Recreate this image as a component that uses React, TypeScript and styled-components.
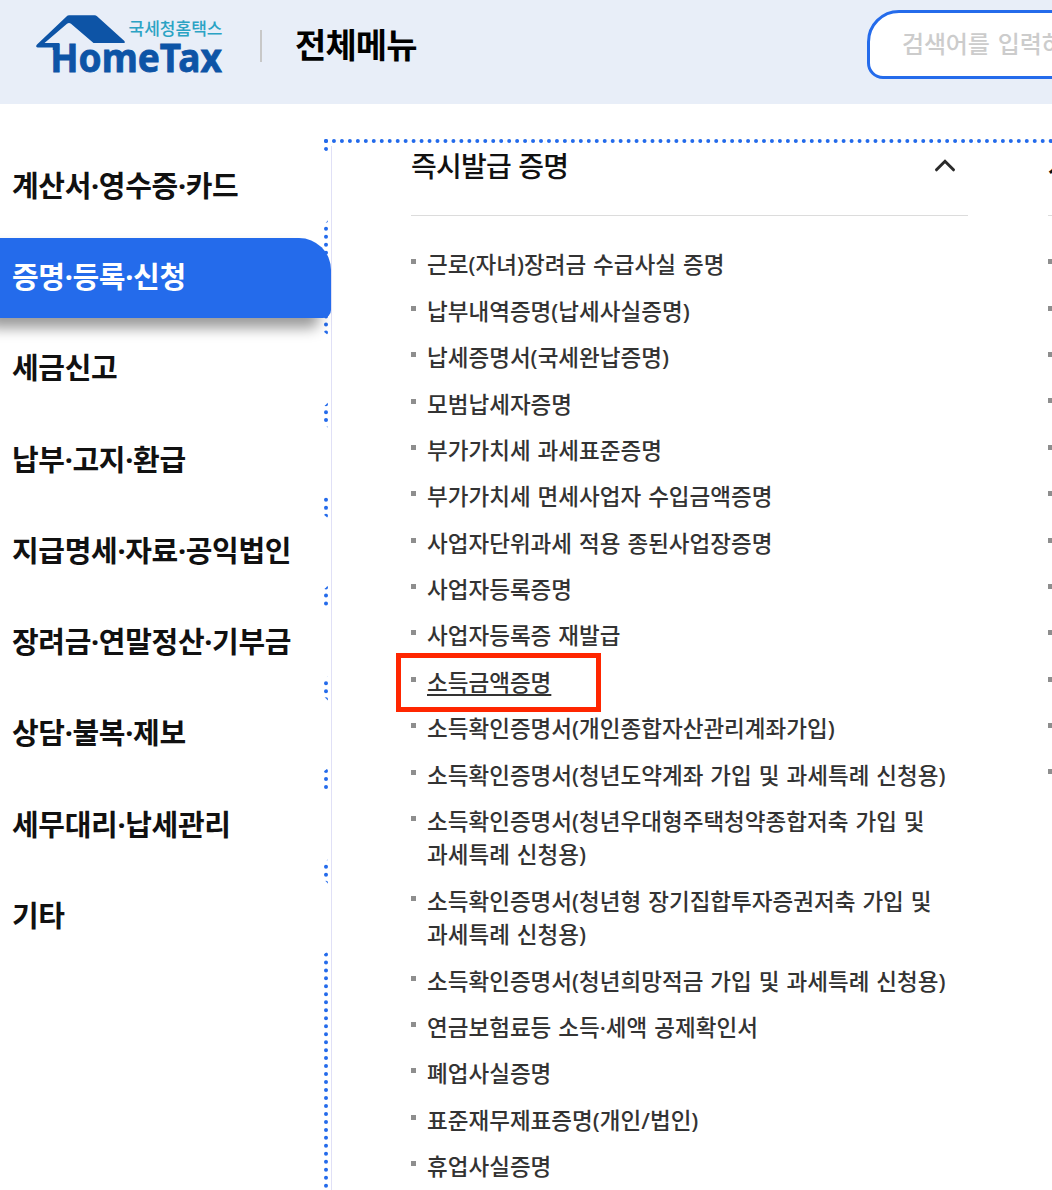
import React from "react";
import styled, { createGlobalStyle, css } from "styled-components";

const BLUE = "#246beb";

const GlobalStyle = createGlobalStyle`
  *, *::before, *::after { box-sizing: border-box; }
  html, body { margin: 0; padding: 0; background: #fff; }
  body {
    overflow: hidden;
    font-family: "Noto Sans", "Noto Sans CJK KR", sans-serif;
    color: #111;
  }
  ul { list-style: none; margin: 0; padding: 0; }
  h1, h2 { margin: 0; }
`;

const Page = styled.div`
  width: 100%;
  height: 1190px;
  overflow: hidden;
  display: flex;
  flex-direction: column;
`;

const Header = styled.header`
  flex: none;
  height: 104px;
  padding: 10px 0 0 36px;
  display: flex;
  align-items: flex-start;
  background: #e8eef8;
`;

const Logo = styled.svg`
  flex: none;
  display: block;
  width: 190px;
  height: 68px;
`;

const Divider = styled.span`
  flex: none;
  width: 2px;
  height: 32px;
  margin: 20px 33px 0 34px;
  background: #c8c8c8;
`;

const PageTitle = styled.h1`
  width: 572px;
  flex: none;
  font-size: 34px;
  line-height: 50px;
  font-weight: 700;
  letter-spacing: -0.9px;
  margin-top: 10px;
  color: #000;
`;

const SearchBox = styled.div`
  flex: none;
  width: 420px;
  height: 69px;
  padding: 0 32px;
  border: 3px solid ${BLUE};
  border-radius: 32px 16px 32px 16px;
  background: #fff;
  font-size: 24px;
  line-height: 61px;
  font-weight: 500;
  letter-spacing: -0.15px;
  word-spacing: 2px;
  color: #ccc;
  white-space: nowrap;
`;

const Body = styled.div`
  flex: 1;
  display: flex;
  align-items: flex-start;
`;

const Nav = styled.nav`
  flex: none;
  width: 331px;
  padding-top: 42.75px;
  position: relative;
  z-index: 1;
`;

const NavList = styled.ul`
  display: flex;
  flex-direction: column;
  gap: 11.25px;
`;

const NavItem = styled.li<{ $active?: boolean }>`
  height: 80px;
  padding-left: 12px;
  line-height: 78px;
  font-size: 29px;
  font-weight: 700;
  letter-spacing: -0.33px;
  white-space: nowrap;
  background: #fff;
  border-radius: 0 16px 16px 0;
  ${(p) =>
    p.$active &&
    css`
      position: relative;
      z-index: 1;
      color: #fff;
      background: ${BLUE};
      border-radius: 0 32px 8px 0;
      box-shadow: -12px 10px 14px rgba(0, 0, 0, 0.4);
    `}
`;

const Panel = styled.main`
  flex: none;
  width: 1200px;
  height: 1058px;
  margin: 35px 0 0 -7px;
  padding: 3px 0 0 3px;
  border: 4px dotted ${BLUE};
`;

const Columns = styled.div`
  height: 1100px;
  padding-left: 79px;
  border-left: 1px solid #e0e0f6;
  display: flex;
  gap: 80px;
`;

const Column = styled.section`
  flex: none;
  width: 557px;
`;

const ColumnHead = styled.div`
  height: 70px;
  padding-right: 12px;
  border-bottom: 1px solid #dcdcdc;
  display: flex;
  justify-content: space-between;
`;

const ColumnTitle = styled.h2`
  font-size: 28px;
  line-height: 40px;
  font-weight: 500;
  letter-spacing: -0.8px;
  word-spacing: 1px;
`;

const Chevron = styled.svg`
  width: 22px;
  height: 16px;
  margin-top: 11px;
`;

const Items = styled.ul`
  padding-top: 32.4px;
  display: flex;
  flex-direction: column;
  gap: 12.93px;
`;

const Item = styled.li<{ $picked?: boolean }>`
  min-height: 33.45px;
  padding-left: 16px;
  position: relative;
  font-size: 22.5px;
  line-height: 33.45px;
  font-weight: 500;
  letter-spacing: 0.02px;
  word-spacing: 1.1px;
  white-space: pre-line;
  color: #333;
  text-decoration: ${(p) => (p.$picked ? "underline" : "none")};
  text-decoration-thickness: 2px;
  text-underline-offset: 3px;

  &::before {
    content: "";
    position: absolute;
    left: 0;
    top: 11px;
    width: 5px;
    height: 5px;
    background: #8e8e8e;
  }

  ${(p) =>
    p.$picked &&
    css`
      &::after {
        content: "";
        position: absolute;
        left: -15px;
        top: -12.7px;
        width: 205px;
        height: 59px;
        border: 5px solid #ff2600;
      }
    `}
`;

const menus = [
  "계산서·영수증·카드",
  "증명·등록·신청",
  "세금신고",
  "납부·고지·환급",
  "지급명세·자료·공익법인",
  "장려금·연말정산·기부금",
  "상담·불복·제보",
  "세무대리·납세관리",
  "기타",
];

const certificates = [
  "근로(자녀)장려금 수급사실 증명",
  "납부내역증명(납세사실증명)",
  "납세증명서(국세완납증명)",
  "모범납세자증명",
  "부가가치세 과세표준증명",
  "부가가치세 면세사업자 수입금액증명",
  "사업자단위과세 적용 종된사업장증명",
  "사업자등록증명",
  "사업자등록증 재발급",
  "소득금액증명",
  "소득확인증명서(개인종합자산관리계좌가입)",
  "소득확인증명서(청년도약계좌 가입 및 과세특례 신청용)",
  "소득확인증명서(청년우대형주택청약종합저축 가입 및\n과세특례 신청용)",
  "소득확인증명서(청년형 장기집합투자증권저축 가입 및\n과세특례 신청용)",
  "소득확인증명서(청년희망적금 가입 및 과세특례 신청용)",
  "연금보험료등 소득·세액 공제확인서",
  "폐업사실증명",
  "표준재무제표증명(개인/법인)",
  "휴업사실증명",
];

const HomeTaxLogo = () => (
  <Logo viewBox="36 10 190 68">
    <path
      d="M37 44.6 L66.5 16.4 Q67.6 15.3 69.2 15.3 H94.5 Q96 15.3 97.3 16.4 L124.4 41 Q125.6 43 123.4 43 H93.5 L71 23.8 Q69 22.2 67 23.8 L44.5 42.9 H59.2 V50 H52.8 V47.6 H37.6 Q35 46.8 37 44.6 Z"
      fill="#0d54a6"
    />
    <text
      x="50.2"
      y="72"
      fontFamily="Noto Sans"
      fontWeight="700"
      fontSize="38.5"
      textLength="171.6"
      lengthAdjust="spacingAndGlyphs"
      fill="#0d54a6"
      stroke="#0d54a6"
      strokeWidth="0.8"
    >
      HomeTax
    </text>
    <text
      x="128.5"
      y="35.4"
      fontFamily="Noto Sans CJK KR"
      fontWeight="500"
      fontSize="17.5"
      textLength="94"
      lengthAdjust="spacingAndGlyphs"
      fill="#2ba3c4"
    >
      국세청홈택스
    </text>
  </Logo>
);

const App = () => (
  <>
    <GlobalStyle />
    <Page>
      <Header>
        <HomeTaxLogo />
        <Divider />
        <PageTitle>전체메뉴</PageTitle>
        <SearchBox>검색어를 입력하세요</SearchBox>
      </Header>
      <Body>
        <Nav>
          <NavList>
            {menus.map((label, i) => (
              <NavItem key={label} $active={i === 1}>
                {label}
              </NavItem>
            ))}
          </NavList>
        </Nav>
        <Panel>
          <Columns>
            <Column>
              <ColumnHead>
                <ColumnTitle>즉시발급 증명</ColumnTitle>
                <Chevron viewBox="0 0 22 16" fill="none">
                  <path
                    d="M2.5 12.8 L11 4.3 L19.5 12.8"
                    stroke="#2b2b2b"
                    strokeWidth="3"
                    strokeLinecap="round"
                  />
                </Chevron>
              </ColumnHead>
              <Items>
                {certificates.map((label) => (
                  <Item key={label} $picked={label === "소득금액증명"}>
                    {label}
                  </Item>
                ))}
              </Items>
            </Column>
            <Column>
              <ColumnHead>
                <ColumnTitle>사실증명</ColumnTitle>
              </ColumnHead>
              <Items>
                {Array.from({ length: 12 }, (_, i) => (
                  <Item key={i} />
                ))}
              </Items>
            </Column>
          </Columns>
        </Panel>
      </Body>
    </Page>
  </>
);

export default App;
